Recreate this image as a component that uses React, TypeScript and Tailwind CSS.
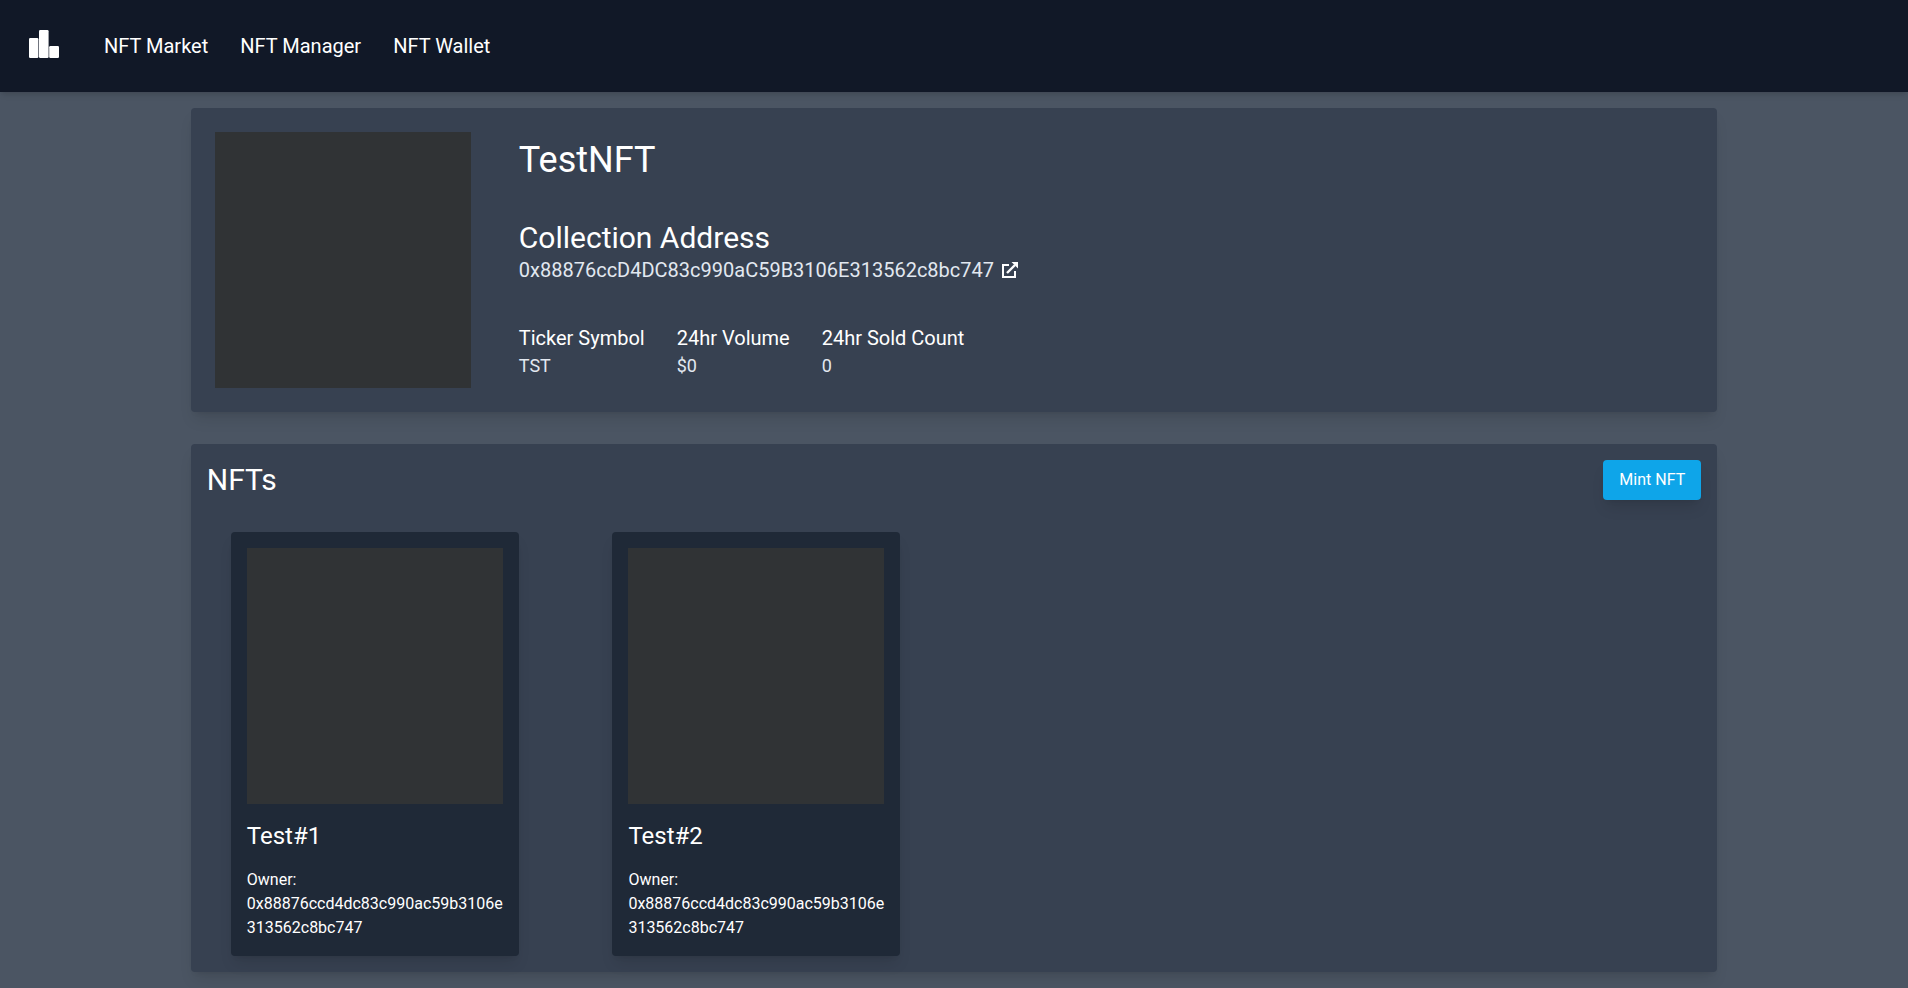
const address = "0x88876ccD4DC83c990aC59B3106E313562c8bc747";

const links = ["NFT Market", "NFT Manager", "NFT Wallet"];

const stats = [
  { label: "Ticker Symbol", value: "TST" },
  { label: "24hr Volume", value: "$0" },
  { label: "24hr Sold Count", value: "0" },
];

const nfts = [
  { name: "Test#1", owner: address.toLowerCase() },
  { name: "Test#2", owner: address.toLowerCase() },
];

function PodiumIcon() {
  return (
    <svg className="size-8" viewBox="0 0 32 32" fill="currentColor" aria-hidden="true">
      <rect x="1" y="10" width="9.4" height="20" rx="1.2" />
      <rect x="11" y="2" width="9.6" height="28" rx="1.2" />
      <rect x="21.2" y="18" width="9.8" height="12" rx="1.2" />
    </svg>
  );
}

function ExternalIcon() {
  return (
    <svg className="size-4" viewBox="0 0 16 16" fill="none" stroke="currentColor" strokeWidth="2" aria-hidden="true">
      <path d="M7 3H1v12h12V9" />
      <path d="M5 11l8-8" strokeWidth="2.4" />
      <path d="M9.5 0H16v6.5z" fill="currentColor" stroke="none" />
    </svg>
  );
}

function Header() {
  return (
    <header className="flex h-[92px] items-center bg-[#111827] px-7 text-white shadow-md">
      <a href="#" aria-label="Home" className="pb-1">
        <PodiumIcon />
      </a>
      <nav className="ml-11 flex gap-8 text-xl">
        {links.map((link) => (
          <a key={link} href="#">
            {link}
          </a>
        ))}
      </nav>
    </header>
  );
}

function Collection() {
  return (
    <section className="flex gap-12 rounded bg-[#374151] p-6 shadow-lg">
      <div className="size-64 shrink-0 bg-[#303335]" />
      <div className="flex flex-col gap-10 py-2">
        <h1 className="text-4xl">TestNFT</h1>
        <div>
          <h2 className="text-3xl">Collection Address</h2>
          <div className="flex items-center gap-2 text-xl">
            <p className="text-[#e2e8f0]">{address}</p>
            <a href="#" aria-label="View address in explorer">
              <ExternalIcon />
            </a>
          </div>
        </div>
        <dl className="flex gap-8">
          {stats.map((stat) => (
            <div key={stat.label}>
              <dt className="text-xl">{stat.label}</dt>
              <dd className="text-lg text-[#e2e8f0]">{stat.value}</dd>
            </div>
          ))}
        </dl>
      </div>
    </section>
  );
}

function NftCard({ name, owner }: { name: string; owner: string }) {
  return (
    <li className="flex w-72 flex-col gap-4 rounded bg-[#1f2937] p-4 shadow-lg">
      <div className="size-64 bg-[#303335]" />
      <h3 className="text-2xl">{name}</h3>
      <p className="break-all">
        Owner:
        <br />
        {owner}
      </p>
    </li>
  );
}

export default function App() {
  return (
    <div className="min-h-screen bg-[#4b5563] font-[Roboto,sans-serif] text-white">
      <Header />
      <main className="mx-auto flex w-4/5 flex-col gap-8 py-4">
        <Collection />
        <section className="rounded bg-[#374151] p-4 shadow-lg">
          <div className="flex items-center justify-between">
            <h2 className="text-3xl">NFTs</h2>
            <button type="button" className="rounded bg-[#0ea5e9] px-4 py-2 shadow-lg">
              Mint NFT
            </button>
          </div>
          <ul className="grid grid-cols-4 gap-20 px-6 pt-8">
            {nfts.map((nft) => (
              <NftCard key={nft.name} name={nft.name} owner={nft.owner} />
            ))}
          </ul>
        </section>
      </main>
    </div>
  );
}
